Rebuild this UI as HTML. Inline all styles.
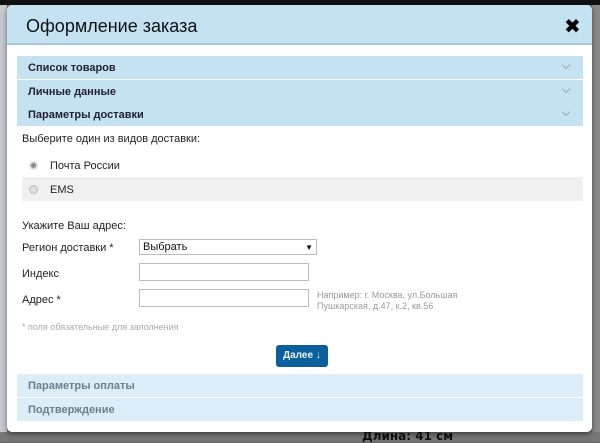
<!DOCTYPE html>
<html><head><meta charset="utf-8"><style>
*{box-sizing:border-box;margin:0;padding:0}
body{width:600px;height:441px;overflow:hidden;background:#6e6e6e;font-family:"Liberation Sans","DejaVu Sans",sans-serif;position:relative}
.top{position:absolute;left:0;top:0;width:600px;height:5px;background:#111}
.side{position:absolute;left:0;top:5px;width:7px;height:436px;background:#c8ccd0}
.rside{position:absolute;left:592px;top:5px;width:8px;height:436px;background:#8a8a8a}
.bot{position:absolute;left:0;top:432px;width:600px;height:9px;background:#777}
.len{position:absolute;left:362px;top:429px;font:bold 12px "DejaVu Sans",sans-serif;color:#111}
.m{position:absolute;left:7px;top:5px;width:585px;height:427px;background:#fff;border-radius:5px;overflow:hidden;box-shadow:0 2px 6px rgba(0,0,0,.5)}
.hd{height:40px;background:#c4e2f2;border-bottom:2px solid #a9c8d9;position:relative}
.hd h1{font-weight:normal;font-size:18px;color:#111;position:absolute;left:19px;top:11px}
.x{position:absolute;left:557px;top:9px;font-size:20px;font-weight:bold;color:#000}
.sec{position:absolute;left:10px;width:566px;height:23px;background:#c4e2f2;font-size:11px;font-weight:bold;color:#223;padding:6px 0 0 11px}
.sec.l{background:#dcedf7;color:#6f7d88}
.chev{position:absolute;right:14px;top:6px;width:6px;height:6px;border-right:1px solid #9ab;border-bottom:1px solid #9ab;transform:rotate(45deg)}
.t{position:absolute;font-size:11px;color:#222;white-space:nowrap}
.rad{position:absolute;width:9px;height:9px;border-radius:50%;background:#ddd;border:1px solid #bbb}
.inp{position:absolute;height:18px;border:1px solid #bbb;background:#fff}
.btn{position:absolute;left:269px;top:340px;width:52px;height:22px;background:#0b5f9c;border-radius:3px;color:#e8f4ff;font-size:10px;font-weight:bold;padding:5px 0 0 7px;white-space:nowrap}
</style></head><body>
<div class="top"></div><div class="side"></div><div class="rside"></div><div class="bot"></div>
<div class="len">Длина: 41 см</div>
<div class="m">
<div class="hd"><h1>Оформление заказа</h1><div class="x">✖</div></div>
<div class="sec" style="top:51px">Список товаров<div class="chev"></div></div>
<div class="sec" style="top:75px">Личные данные<div class="chev"></div></div>
<div class="sec" style="top:98px">Параметры доставки<div class="chev"></div></div>
<div class="t" style="left:15px;top:128px">Выберите один из видов доставки:</div>
<div class="rad" style="left:22px;top:156px;background:#888;border:2px solid #ddd"></div>
<div class="t" style="left:43px;top:155px">Почта России</div>
<div style="position:absolute;left:15px;top:172px;width:561px;height:24px;background:#f0f0f0"></div>
<div class="rad" style="left:22px;top:180px"></div>
<div class="t" style="left:43px;top:179px">EMS</div>
<div class="t" style="left:15px;top:215px">Укажите Ваш адрес:</div>
<div class="t" style="left:15px;top:237px">Регион доставки *</div>
<div class="inp" style="left:132px;top:234px;width:178px;height:16px;font-size:11px;padding:1px 3px;color:#111">Выбрать<span style="float:right;font-size:8px;margin-top:2px">▼</span></div>
<div class="t" style="left:15px;top:263px">Индекс</div>
<div class="inp" style="left:132px;top:258px;width:170px"></div>
<div class="t" style="left:15px;top:289px">Адрес *</div>
<div class="inp" style="left:132px;top:284px;width:170px"></div>
<div class="t" style="left:310px;top:285px;font-size:9px;color:#999;line-height:11px">Например: г. Москва, ул.Большая<br>Пушкарская, д.47, к.2, кв.56</div>
<div class="t" style="left:15px;top:317px;font-size:9px;color:#aaa">* поля обязательные для заполнения</div>
<div class="btn">Далее ↓</div>
<div class="sec l" style="top:369px">Параметры оплаты</div>
<div class="sec l" style="top:393px">Подтверждение</div>
</div>
</body></html>
